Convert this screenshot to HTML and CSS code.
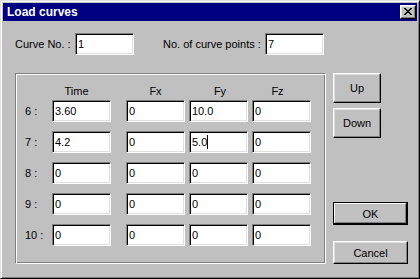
FILE: index.html
```html
<!DOCTYPE html>
<html>
<head>
    <title>Load curves</title>
    <link rel="stylesheet" href="styles.css">
</head>
<body>
<div class="window">
    <div class="titlebar">
        <span class="title">Load curves</span>
        <div class="close-btn">
            <svg width="8" height="7" viewBox="0 0 8 7" shape-rendering="crispEdges">
                <path fill="#000" d="M0 0h2v1H0z M6 0h2v1H6z M1 1h2v1H1z M5 1h2v1H5z M2 2h4v1H2z M3 3h2v1H3z M2 4h4v1H2z M1 5h2v1H1z M5 5h2v1H5z M0 6h2v1H0z M6 6h2v1H6z"/>
            </svg>
        </div>
    </div>

    <div class="content">
        <div class="top-row">
            <label class="lbl-curve">Curve No. :</label>
            <div class="field">1</div>
            <label class="lbl-points">No. of curve points :</label>
            <div class="field">7</div>
        </div>

        <div class="main-row">
            <div class="group">
                <div class="grid head">
                    <span></span>
                    <span class="col-head head-time">Time</span>
                    <span class="col-head">Fx</span>
                    <span class="col-head head-fy">Fy</span>
                    <span class="col-head head-fz">Fz</span>
                </div>
                <div class="grid rows">
                    <span class="row-label">6 :</span>
                    <div class="field">3.60</div>
                    <div class="field">0</div>
                    <div class="field">10.0</div>
                    <div class="field">0</div>

                    <span class="row-label">7 :</span>
                    <div class="field">4.2</div>
                    <div class="field">0</div>
                    <div class="field">5.0<span class="caret"></span></div>
                    <div class="field">0</div>

                    <span class="row-label">8 :</span>
                    <div class="field">0</div>
                    <div class="field">0</div>
                    <div class="field">0</div>
                    <div class="field">0</div>

                    <span class="row-label">9 :</span>
                    <div class="field">0</div>
                    <div class="field">0</div>
                    <div class="field">0</div>
                    <div class="field">0</div>

                    <span class="row-label">10 :</span>
                    <div class="field">0</div>
                    <div class="field">0</div>
                    <div class="field">0</div>
                    <div class="field">0</div>
                </div>
            </div>

            <div class="side">
                <button class="btn btn-small">Up</button>
                <button class="btn btn-small btn-down">Down</button>
                <button class="btn btn-wide btn-default">OK</button>
                <button class="btn btn-wide btn-cancel">Cancel</button>
            </div>
        </div>
    </div>
</div>
</body>
</html>
```

FILE: styles.css
```css
body {
    margin: 0;
    font-family: "Liberation Sans", Arial, sans-serif;
    font-size: 11px;
    color: #000;
    background-color: #c0c0c0;
}

.window {
    width: 420px;
    height: 279px;
    box-sizing: border-box;
    background-color: #c0c0c0;
    border: 1px solid;
    border-color: #dfdfdf #000 #000 #dfdfdf;
    box-shadow: inset 1px 1px #fff, inset -1px -1px #808080;
    padding: 2px;
}

.titlebar {
    height: 18px;
    background-color: #000080;
    display: flex;
    align-items: center;
    justify-content: space-between;
    padding: 0 1px 0 4px;
}

.title {
    color: #fff;
    font-weight: bold;
    font-size: 12px;
    line-height: 18px;
}

.close-btn {
    width: 16px;
    height: 14px;
    box-sizing: border-box;
    background-color: #c0c0c0;
    border: 1px solid;
    border-color: #fff #000 #000 #fff;
    box-shadow: inset -1px -1px #808080, inset 1px 1px #dfdfdf;
    display: flex;
    align-items: center;
    justify-content: center;
}

.close-btn svg {
    display: block;
    margin: 0 0 1px 0;
}

.content {
    padding: 12px 0 0 12px;
}

.top-row {
    display: flex;
    align-items: center;
    height: 22px;
}

.lbl-curve {
    width: 60px;
}

.lbl-points {
    width: 102px;
    margin-left: 29px;
}

.field {
    width: 59px;
    height: 22px;
    box-sizing: border-box;
    background-color: #fff;
    border: 1px solid;
    border-color: #808080 #fff #fff #808080;
    box-shadow: inset 1px 1px #000, inset -1px -1px #dfdfdf;
    padding-left: 2px;
    display: flex;
    align-items: center;
    line-height: 13px;
}

.caret {
    display: inline-block;
    width: 1px;
    height: 14px;
    background-color: #000;
}

.main-row {
    display: flex;
    margin-top: 18px;
}

.group {
    width: 311px;
    height: 191px;
    box-sizing: border-box;
    border: 1px solid;
    border-color: #808080 #fff #fff #808080;
    box-shadow: inset 1px 1px #fff, inset -1px -1px #808080;
    padding: 11px 0 0 9px;
}

.grid {
    display: grid;
    grid-template-columns: 27px 74px 63px 63px 59px;
}

.head {
    line-height: 13px;
    margin-bottom: 2px;
}

.col-head {
    width: 59px;
    text-align: center;
    box-sizing: border-box;
}

.head-time {
    padding-right: 10px;
}

.head-fy {
    padding-left: 3px;
}

.head-fz {
    padding-right: 8px;
}

.rows {
    row-gap: 9px;
}

.row-label {
    display: flex;
    align-items: center;
}

.side {
    display: flex;
    flex-direction: column;
    align-items: flex-start;
    margin-left: 7px;
}

.btn {
    font-family: "Liberation Sans", Arial, sans-serif;
    font-size: 11px;
    color: #000;
    background-color: #c0c0c0;
    box-sizing: border-box;
    padding: 0;
    border: 1px solid;
    border-color: #fff #000 #000 #fff;
    box-shadow: inset -1px -1px #808080, inset 1px 1px #dfdfdf;
}

.btn-small {
    width: 48px;
    height: 30px;
}

.btn-down {
    margin-top: 5px;
}

.btn-wide {
    width: 75px;
    height: 23px;
}

.btn-default {
    margin-top: 64px;
    border-color: #000;
    box-shadow: inset -1px -1px #000, inset 1px 1px #fff, inset -2px -2px #808080;
}

.btn-cancel {
    margin-top: 16px;
}
```
